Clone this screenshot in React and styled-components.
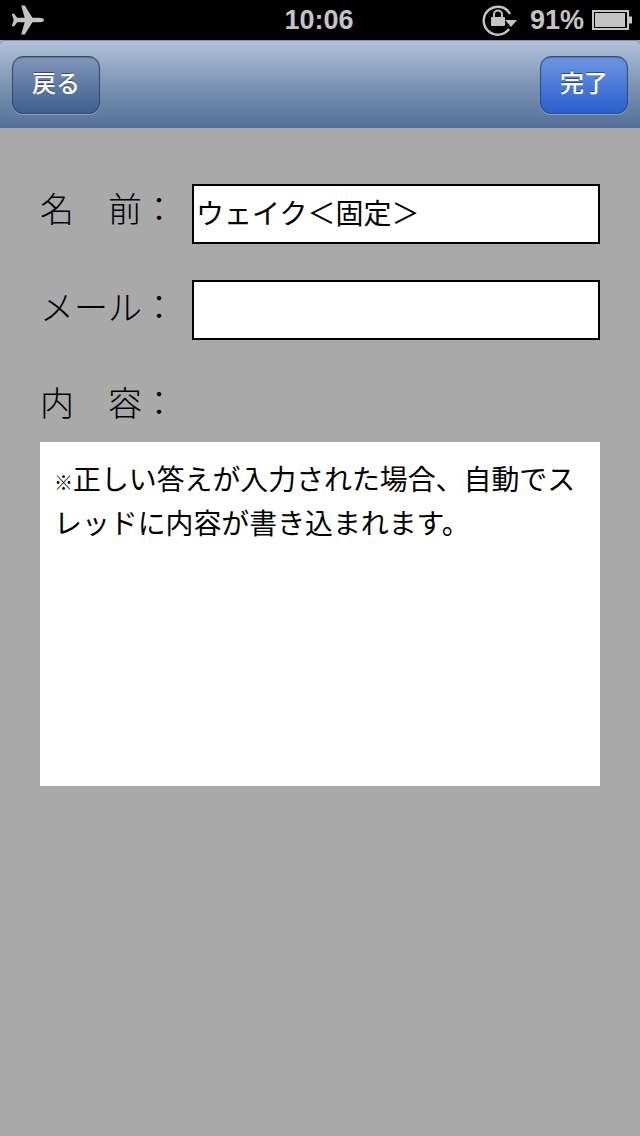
import React from 'react';
import styled, { createGlobalStyle } from 'styled-components';

const Global = createGlobalStyle`
  html, body {
    margin: 0;
    padding: 0;
    background: #000;
  }
`

const Screen = styled.div`
  width: 640px;
  height: 1136px;
  overflow: hidden;
  display: flex;
  flex-direction: column;
  background: #a9a9a9;
  font-family: "Noto Sans CJK JP", sans-serif;
`

// Status bar
const StatusBar = styled.div`
  height: 40px;
  flex: none;
  background: #000;
  color: #c4c4c4;
  display: grid;
  grid-template-columns: 1fr auto 1fr;
  align-items: center;
  font-family: "Liberation Sans", Arial, sans-serif;
  font-weight: 700;
  font-size: 27px;
`

const StatusLeft = styled.div`
  display: flex;
  align-items: center;
  padding-left: 11px;
`

const Clock = styled.span`
  margin-left: -2px;
`

const StatusRight = styled.div`
  display: flex;
  align-items: center;
  justify-content: flex-end;
  padding-right: 6px;
`

const Percent = styled.span`
  margin-left: 12px;
  margin-right: 8px;
`

// Navigation bar
const NavBar = styled.div`
  height: 88px;
  flex: none;
  box-sizing: border-box;
  padding: 15px 12px 0;
  display: flex;
  justify-content: space-between;
  align-items: flex-start;
  border-radius: 5px 5px 0 0;
  border-top: 1px solid #7e93b0;
  background: linear-gradient(#b0c0d8 2px, #adbdd6 4px, #7e95b3 50%, #53709a 100%);
`

const NavButton = styled.div`
  width: 88px;
  height: 58px;
  box-sizing: border-box;
  padding-bottom: 8px;
  border-radius: 11px;
  border: 1px solid ${p => (p.$primary ? '#2b4d86' : '#34496b')};
  box-shadow: 0 1px 0 rgba(255, 255, 255, 0.3), inset 0 1px 1px rgba(0, 0, 0, 0.25);
  background: ${p => (p.$primary
    ? 'linear-gradient(#6c96e2, #2a5fd0)'
    : 'linear-gradient(#7f97ba, #3e5f8f)')};
  color: #fff;
  font-size: 24px;
  font-weight: 500;
  text-shadow: 0 -1px 0 rgba(0, 0, 0, 0.45);
  display: flex;
  align-items: center;
  justify-content: center;
`

// Form
const Form = styled.div`
  padding: 56px 40px 0;
  display: flex;
  flex-direction: column;
`

const Row = styled.div`
  display: flex;
  align-items: center;
  justify-content: space-between;
  height: 60px;
  margin-bottom: 36px;
`

const ContentRow = styled(Row)`
  height: 52px;
  margin-bottom: 14px;
`

const Label = styled.div`
  width: 152px;
  padding-bottom: ${p => p.$lift || 0}px;
  font-size: 34px;
  line-height: 44px;
  font-weight: 300;
  color: #000;
  white-space: pre;
`

const Field = styled.div`
  flex: none;
  width: 408px;
  height: 60px;
  box-sizing: border-box;
  border: 2px solid #000;
  background: #fff;
  padding-left: 2px;
  font-size: 28px;
  line-height: 52px;
  color: #000;
`

const Body = styled.div`
  width: 560px;
  height: 344px;
  box-sizing: border-box;
  background: #fff;
  padding: 14px 14px 0 14px;
  font-size: 27.9px;
  line-height: 44px;
  color: #000;
`

const Line = styled.div`
  white-space: nowrap;
  height: 44px;
`

const Mark = styled.span`
  font-size: 19px;
  font-weight: 700;
  line-height: 1;
`

const Plane = () => (
  <svg width="34" height="32" viewBox="0 0 34 32">
    <path
      fill="#c4c4c4"
      d="M33 16c0-1.400-2.500-2.300-5-2.300h-6.600L13.800 1.500h-3.600l3.500 12.200H6.300L3 9.800H0.800l1.900 6.200-1.900 6.200H3l3.300-3.900h7.400L10.200 30.500h3.600l7.600-12.200H28c2.500 0 5-.9 5-2.300z"
    />
  </svg>
)

const RotationLock = () => (
  <svg width="36" height="32" viewBox="0 0 36 32">
    <path d="M28 10A14 14 0 1 0 27 25" fill="none" stroke="#c4c4c4" strokeWidth="2.400" />
    <path d="M23 16h12l-6 7z" fill="#c4c4c4" />
    <rect x="9" y="13" width="14" height="9" rx="1" fill="#c4c4c4" />
    <path d="M12 13v-2.500a4 4 0 0 1 8 0V13" fill="none" stroke="#c4c4c4" strokeWidth="2" />
  </svg>
)

const Battery = () => (
  <svg width="42" height="20" viewBox="0 0 42 20">
    <rect x="1" y="1" width="35" height="18" fill="none" stroke="#c4c4c4" strokeWidth="2" />
    <rect x="3" y="3" width="30" height="14" fill="#c4c4c4" />
    <rect x="37" y="6.500" width="3" height="7" fill="#c4c4c4" />
  </svg>
)

const App = () => {
  return (
    <Screen>
      <Global />
      <StatusBar>
        <StatusLeft><Plane /></StatusLeft>
        <Clock>10:06</Clock>
        <StatusRight>
          <RotationLock />
          <Percent>91%</Percent>
          <Battery />
        </StatusRight>
      </StatusBar>
      <NavBar>
        <NavButton>戻る</NavButton>
        <NavButton $primary>完了</NavButton>
      </NavBar>
      <Form>
        <Row>
          <Label $lift={12}>名　前：</Label>
          <Field>ウェイク＜固定＞</Field>
        </Row>
        <Row>
          <Label $lift={8}>メール：</Label>
          <Field />
        </Row>
        <ContentRow>
          <Label>内　容：</Label>
        </ContentRow>
        <Body>
          <Line><Mark>※</Mark>正しい答えが入力された場合、自動でス</Line>
          <Line>レッドに内容が書き込まれます。</Line>
        </Body>
      </Form>
    </Screen>
  )
}

export default App;
